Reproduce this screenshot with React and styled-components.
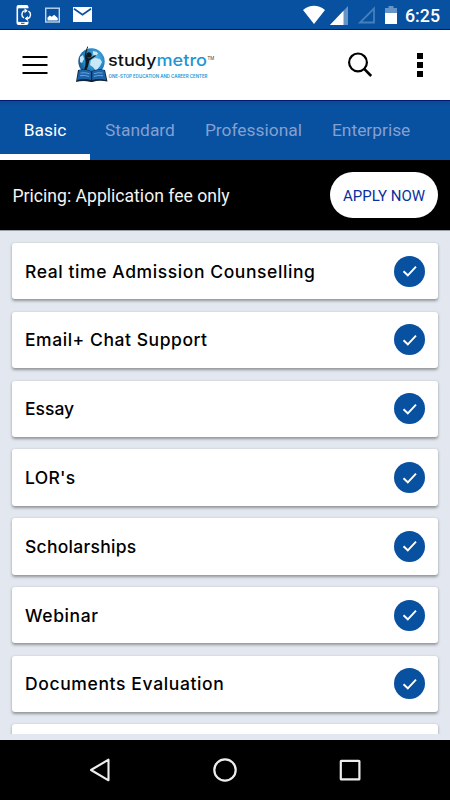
import styled, { createGlobalStyle } from "styled-components";
import { useState } from "react";

const tabs = ["Basic", "Standard", "Professional", "Enterprise"];

const services = [
  { name: "Real time Admission Counselling", spacing: 0.59 },
  { name: "Email+ Chat Support", spacing: 0.55 },
  { name: "Essay", spacing: 0 },
  { name: "LOR's", spacing: 0.3 },
  { name: "Scholarships", spacing: 0.27 },
  { name: "Webinar", spacing: 0.6 },
  { name: "Documents Evaluation", spacing: 0.63 },
  { name: "", spacing: 0 },
];

const StatusLeft = () => (
  <svg width="96" height="30" viewBox="0 0 96 30">
    {/* phone with sync arrows */}
    <path
      d="M28.500 8.600V7q0-2-2-2h-8q-2 0-2 2v16q0 2 2 2h8q2 0 2-2v-2.500h-1.500v1.200h-8.700V8.600z"
      fill="#fff"
    />
    <path d="M21 23.300h3.500" stroke="#0850a0" strokeWidth="1" />
    <path d="M18.300 8.600h10.200v13.100H18.300z" fill="#0850a0" />
    <path
      d="M24 18a4 4 0 0 1 .5-7.300M28.400 11.200a4 4 0 0 1-.5 7.300"
      fill="none"
      stroke="#fff"
      strokeWidth="1.400"
    />
    <path d="M24.500 8.200l3.200 2.500-3.200 2.500zM27.900 15.900v5l-3.200-2.500z" fill="#fff" />
    {/* picture */}
    <rect x="45.700" y="8.200" width="13.600" height="13.800" fill="none" stroke="#c3d5ea" strokeWidth="1.400" />
    <path d="M47.500 20.500v-3l2.300-2 2.100 1.300 2.200-2 3.600 3.200v2.500z" fill="#fff" />
    {/* mail */}
    <path d="M73 7h19v15H73z" fill="#fff" />
    <path d="M74 8.800l8.500 6 8.500-6" fill="none" stroke="#0850a0" strokeWidth="1.700" />
  </svg>
);

const StatusRight = () => (
  <svg width="100" height="30" viewBox="300 0 100 30">
    <path d="M303 10q11-8.400 22 0l-11 14z" fill="#fff" />
    <path d="M348 6v19h-18z" fill="#6594c8" />
    <path d="M343.500 10.800V25H330z" fill="#fff" />
    <path d="M374 8.500v14h-14z" fill="none" stroke="#477fbc" strokeWidth="1.800" />
    <path d="M385 8h3.500V6h5v2h3.500v5h-12z" fill="#6594c8" />
    <path d="M385 13h12v11h-12z" fill="#fff" />
  </svg>
);

const Logo = () => (
  <svg width="140" height="44" viewBox="76 44 140 44">
    <defs>
      <radialGradient id="globe" cx="0.6" cy="0.4" r="0.65">
        <stop offset="0" stopColor="#69c3ef" />
        <stop offset="0.6" stopColor="#2389c9" />
        <stop offset="1" stopColor="#174f83" />
      </radialGradient>
    </defs>
    <circle cx="91.500" cy="62.500" r="13.200" fill="url(#globe)" />
    {/* continents */}
    <path
      d="M93 52l4 1 1 2-3 2-2-2zM91 61l4-2 5 1 2 3-2 4-4 5-3-4-3-2zM80 58l3-2 1 4-2 4-2-1z"
      fill="#c8e8f7"
    />
    {/* reaching figure */}
    <circle cx="89" cy="56" r="2.700" fill="#101820" />
    <path
      d="M87.300 47.500l-1.800 5q-1.500 4-.2 8.500q1.200 4-1.800 11l2.600-.5q2.700-5 3.300-10l6.500-4.500-.5-1-6.500 3.500q-2-.5-2.500-3.500t1.800-8.200z"
      fill="#101820"
    />
    {/* open book */}
    <path d="M78 71q7-1.800 13.500 1.200 6.500-3 13.500-1.200l2.500 11.500q-9-1.500-15 .5h-2q-7-2-14.500 0z" fill="#11243d" />
    <path d="M79 71.300q7-1.300 12 1.200v8.500q-6.500-2-14 0zM92.200 72.500q5.500-2.500 12-1.200l2 9.700q-8-2-14 0z" fill="#1b62a8" />
    <path
      d="M80.500 74q5-.8 9 .7M80 76.700q5-.8 9 .7M94 74.700q4-1.500 8.500-.7M94 77.400q4-1.500 9-.7"
      fill="none"
      stroke="#82b5de"
      strokeWidth="0.8"
    />
    <WordMark x="108" y="66.500" textLength="99" lengthAdjust="spacingAndGlyphs">
      study<tspan fill="#2295d3">metro</tspan>
    </WordMark>
    <TradeMark x="207.500" y="60.500">TM</TradeMark>
    <TagLine x="108.500" y="79.300" textLength="99" lengthAdjust="spacingAndGlyphs">
      ONE-STOP EDUCATION AND CAREER CENTER
    </TagLine>
  </svg>
);

const App = () => {
  const [active, setActive] = useState("Basic");

  return (
    <Screen>
      <GlobalStyle />
      <StatusBar>
        <StatusLeft />
        <StatusGroup>
          <StatusRight />
          <Clock>6:25</Clock>
        </StatusGroup>
      </StatusBar>

      <Header>
        <IconButton $width={26} aria-label="Menu">
          <svg width="26" height="20" viewBox="0 0 26 20">
            <path d="M0.500 2h25M0.500 10h25M0.500 18h25" stroke="#000" strokeWidth="2" />
          </svg>
        </IconButton>
        <LogoWrap>
          <Logo />
        </LogoWrap>
        <IconButton $width={26} aria-label="Search">
          <svg width="26" height="26" viewBox="0 0 26 26" fill="none" stroke="#000">
            <circle cx="11" cy="10.400" r="8.900" strokeWidth="2.200" />
            <path d="M17.200 16.800l7 7.200" strokeWidth="2.600" />
          </svg>
        </IconButton>
        <MoreButton aria-label="More">
          <Dot />
          <Dot />
          <Dot />
        </MoreButton>
      </Header>

      <Tabs>
        {tabs.map((tab) => (
          <Tab key={tab} $active={tab === active} onClick={() => setActive(tab)}>
            {tab}
          </Tab>
        ))}
      </Tabs>

      <Pricing>
        <PricingText>Pricing: Application fee only</PricingText>
        <ApplyButton>APPLY NOW</ApplyButton>
      </Pricing>

      <ListArea>
        <List>
          {services.map((service, i) => (
            <Card key={i}>
              <CardTitle $spacing={service.spacing}>{service.name}</CardTitle>
              <Check>
                <svg width="16" height="14" viewBox="0 0 16 14">
                  <path d="M1.500 7.300l4.300 4L14 2.600" fill="none" stroke="#fff" strokeWidth="1.900" />
                </svg>
              </Check>
            </Card>
          ))}
        </List>
      </ListArea>

      <NavBar>
        <svg width="24" height="26" viewBox="0 0 24 26">
          <path d="M3 13L20.500 2.700v20.600z" fill="none" stroke="#eee" strokeWidth="2.100" strokeLinejoin="round" />
        </svg>
        <svg width="26" height="26" viewBox="0 0 26 26">
          <circle cx="13" cy="13" r="10.700" fill="none" stroke="#eee" strokeWidth="2.200" />
        </svg>
        <svg width="24" height="26" viewBox="0 0 24 26">
          <rect x="2.800" y="3.800" width="18.600" height="18.600" rx="0.500" fill="none" stroke="#eee" strokeWidth="2.200" />
        </svg>
      </NavBar>
    </Screen>
  );
};

export default App;

const GlobalStyle = createGlobalStyle`
  * {
    box-sizing: border-box;
  }

  body {
    margin: 0;
    font-family: Roboto, sans-serif;
  }

  svg {
    display: block;
    flex-shrink: 0;
    overflow: visible;
  }

  button {
    font-family: inherit;
    border: none;
    padding: 0;
    cursor: pointer;
  }
`;

const Screen = styled.div`
  display: flex;
  flex-direction: column;
  width: 450px;
  height: 800px;
  overflow: hidden;
  background-color: #e3e8f0;
`;

const StatusBar = styled.div`
  display: flex;
  justify-content: space-between;
  height: 30px;
  flex-shrink: 0;
  padding-right: 10px;
  background-color: #0850a0;
  border-bottom: 1px solid #00187c;
`;

const StatusGroup = styled.div`
  display: flex;
  gap: 5px;
`;

const Clock = styled.span`
  width: 35px;
  color: #fff;
  font-size: 17.8px;
  font-weight: 500;
  line-height: 32px;
  white-space: nowrap;
`;

const Header = styled.header`
  display: flex;
  align-items: center;
  height: 71px;
  flex-shrink: 0;
  padding: 0 27px 0 22px;
  background-color: #fff;
  border-bottom: 1px solid #00187c;
`;

const IconButton = styled.button`
  width: ${({ $width }) => $width}px;
  background: none;
`;

const LogoWrap = styled.div`
  flex: 1;
  padding-left: 28px;
`;

const WordMark = styled.text`
  fill: #111;
  font-family: Inter, sans-serif;
  font-size: 16.5px;
  font-weight: 500;
`;

const TradeMark = styled.text`
  fill: #444;
  font-size: 4.5px;
`;

const TagLine = styled.text`
  fill: #2295d3;
  font-family: Inter, sans-serif;
  font-size: 4.8px;
  font-weight: 600;
`;

const MoreButton = styled.button`
  display: flex;
  flex-direction: column;
  gap: 3px;
  margin-left: 44px;
  background: none;
`;

const Dot = styled.span`
  width: 6.5px;
  height: 6px;
  background-color: #000;
`;

const Tabs = styled.nav`
  display: flex;
  height: 59px;
  flex-shrink: 0;
  background: linear-gradient(#0b4a90, #0850a0 6px);
`;

const Tab = styled.button`
  min-width: 90px;
  padding: 5px 15px 0;
  background: none;
  border-bottom: 6px solid ${({ $active }) => ($active ? "#fff" : "transparent")};
  color: ${({ $active }) => ($active ? "#fff" : "#84a0d0")};
  font-size: 17.4px;
`;

const Pricing = styled.div`
  display: flex;
  align-items: center;
  justify-content: space-between;
  height: 70px;
  flex-shrink: 0;
  padding: 0 12px 0 12.5px;
  background-color: #000;
`;

const PricingText = styled.span`
  padding-top: 1px;
  color: #f4f4f4;
  font-size: 17.6px;
`;

const ApplyButton = styled.button`
  width: 108px;
  height: 46px;
  padding-top: 1px;
  border-radius: 23px;
  background-color: #fff;
  color: #0a2fa0;
  font-size: 15px;
  white-space: nowrap;
`;

const ListArea = styled.main`
  height: 510px;
  flex-shrink: 0;
  padding-bottom: 6px;
  border-top: 1px solid #9a9ea6;
`;

const List = styled.div`
  display: flex;
  flex-direction: column;
  gap: 12.4px;
  height: 503px;
  padding: 12px 12px 0;
  overflow: hidden;
`;

const Card = styled.div`
  display: flex;
  align-items: center;
  justify-content: space-between;
  height: 56.4px;
  flex-shrink: 0;
  padding: 0 13px;
  border-radius: 3px;
  background-color: #fff;
  box-shadow: 0 1.5px 3px rgba(0, 0, 0, 0.36);
`;

const CardTitle = styled.span`
  color: #000;
  font-family: Inter, sans-serif;
  font-size: 17.5px;
  font-weight: 500;
  letter-spacing: ${({ $spacing }) => $spacing}px;
  white-space: nowrap;
`;

const Check = styled.span`
  display: flex;
  align-items: center;
  justify-content: center;
  width: 31px;
  height: 31px;
  border-radius: 50%;
  background-color: #0850a0;
`;

const NavBar = styled.footer`
  display: flex;
  align-items: center;
  justify-content: space-between;
  height: 60px;
  flex-shrink: 0;
  padding: 0 88px;
  background-color: #000;
`;
